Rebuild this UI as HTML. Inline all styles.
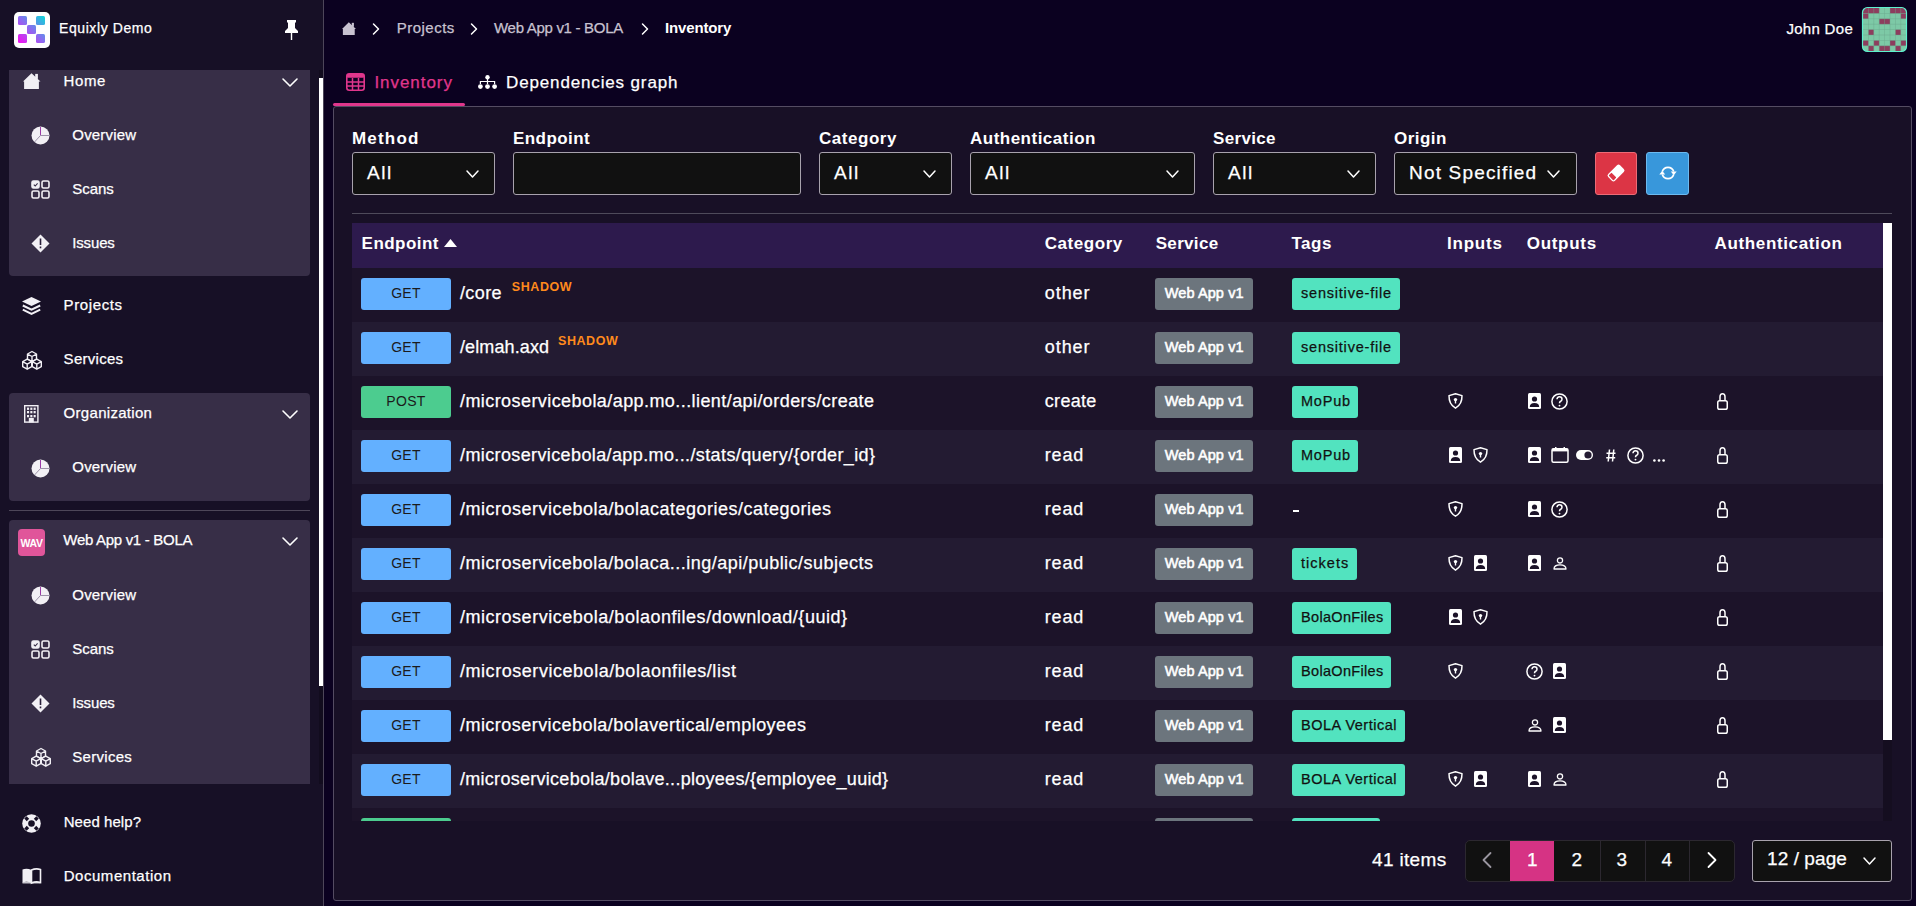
<!DOCTYPE html>
<html><head><meta charset="utf-8"><style>
html,body{margin:0;padding:0;width:1916px;height:906px;overflow:hidden;background:#0b0120;font-family:"Liberation Sans", sans-serif;}
.r{position:absolute;box-sizing:border-box;}
svg.r{overflow:visible}
.t{position:absolute;white-space:nowrap;}
</style></head><body>
<div class="r" style="left:0px;top:0px;width:323px;height:906px;background:#171026;"></div><div class="r" style="left:323px;top:0px;width:1px;height:906px;background:#4d4659;"></div><svg class="r" style="left:14px;top:12px;" width="36" height="36" viewBox="0 0 36 36"><rect width="36" height="36" rx="5" fill="#fff"/><defs><linearGradient id="lg" gradientUnits="userSpaceOnUse" x1="4" y1="31" x2="31" y2="4"><stop offset="0" stop-color="#f50ef0"/><stop offset="0.5" stop-color="#8a6cf0"/><stop offset="1" stop-color="#0ad8d8"/></linearGradient></defs><g fill="url(#lg)"><rect x="4" y="4" width="9" height="9" rx="1.5"/><rect x="22" y="4" width="9" height="9" rx="1.5"/><rect x="13" y="13" width="9" height="9" rx="1.5"/><rect x="4" y="22" width="9" height="9" rx="1.5"/><rect x="22" y="22" width="9" height="9" rx="1.5"/></g></svg><span class="t" style="left:59px;top:21.10px;font-size:14px;line-height:14px;color:#fff;font-weight:400;letter-spacing:0.584px;-webkit-text-stroke:0.25px #fff;">Equixly Demo</span><svg class="r" style="left:284px;top:20px;" width="15" height="20" viewBox="0 0 15 20"><path d="M3 0h9v2l-1 1v5l3 3v2H1v-2l3-3V3L3 2z" fill="#fff"/><rect x="6.8" y="13" width="1.4" height="7" fill="#fff"/></svg><div class="r" style="left:0;top:70px;width:319px;height:714px;overflow:hidden"><div class="r" style="left:9px;top:-30px;width:301px;height:236px;background:#372e47;border-radius:4px"></div><div class="r" style="left:9px;top:323px;width:301px;height:108px;background:#372e47;border-radius:4px"></div><div class="r" style="left:9px;top:440px;width:301px;height:1px;background:#4d4659;"></div><div class="r" style="left:9px;top:450px;width:301px;height:300px;background:#372e47;border-radius:4px"></div></div><div class="r" style="left:319px;top:70px;width:4px;height:714px;background:#120c1e;"></div><div class="r" style="left:319px;top:78px;width:4px;height:608px;background:#ffffff;"></div><div class="r" style="left:0;top:70px;width:319px;height:714px;overflow:hidden"><svg class="r" style="left:23px;top:2.9000000000000057px;" width="17.5" height="16" viewBox="0 0 17.5 16"><path d="M0 8.6 L8.5 0.2 L17.5 8.6 H15.9 V16 H1.1 V8.6Z" fill="#f2f0f5"/><rect x="12.2" y="0.9" width="2.7" height="5" fill="#f2f0f5"/></svg><span class="t" style="left:63.5px;top:2.65px;font-size:15px;line-height:15px;color:#fff;font-weight:400;letter-spacing:0.610px;-webkit-text-stroke:0.25px #fff;">Home</span><svg class="r" style="left:282px;top:8px;" width="16" height="9" viewBox="0 0 16 9"><path d="M1 1 L8.0 8 L15 1" fill="none" stroke="#fff" stroke-width="1.6" stroke-linecap="round" stroke-linejoin="round"/></svg><svg class="r" style="left:31px;top:55.5px;" width="19" height="19" viewBox="0 0 19 19"><circle cx="9.5" cy="9.5" r="9" fill="#f2f0f5"/><path d="M9.5 1v8.5" stroke="#9b3aa8" stroke-width="1" fill="none"/><path d="M9.5 9.5h8.5M9.5 9.5L3.5 16" stroke="#9d93aa" stroke-width="1" fill="none"/></svg><span class="t" style="left:72.3px;top:56.55px;font-size:15px;line-height:15px;color:#fff;font-weight:400;letter-spacing:0.189px;-webkit-text-stroke:0.25px #fff;">Overview</span><svg class="r" style="left:31px;top:109.5px;" width="19" height="19" viewBox="0 0 19 19"><g fill="none" stroke="#f2f0f5" stroke-width="1.6"><rect x="1" y="1" width="7" height="7" rx="1.5" fill="#f2f0f5"/><rect x="11" y="1" width="7" height="7" rx="1.5"/><rect x="1" y="11" width="7" height="7" rx="1.5"/><rect x="11" y="11" width="7" height="7" rx="1.5"/></g><path d="M2.8 4.6l1.4 1.4 2.4-2.6" stroke="#372e47" stroke-width="1.1" fill="none"/></svg><span class="t" style="left:72.3px;top:110.55px;font-size:15px;line-height:15px;color:#fff;font-weight:400;letter-spacing:-0.047px;-webkit-text-stroke:0.25px #fff;">Scans</span><svg class="r" style="left:31px;top:163.5px;" width="19" height="19" viewBox="0 0 19 19"><path d="M9.5 0.5 L18.5 9.5 L9.5 18.5 L0.5 9.5Z" fill="#f2f0f5" stroke-linejoin="round"/><rect x="8.7" y="4.5" width="1.6" height="6.5" fill="#2a1f3a"/><rect x="8.7" y="12.5" width="1.6" height="1.8" fill="#2a1f3a"/></svg><span class="t" style="left:72.3px;top:164.55px;font-size:15px;line-height:15px;color:#fff;font-weight:400;letter-spacing:-0.170px;-webkit-text-stroke:0.25px #fff;">Issues</span><svg class="r" style="left:22px;top:227px;" width="19" height="18" viewBox="0 0 19 18"><path d="M9.5 0 L19 4.5 L9.5 9 L0 4.5Z" fill="#f2f0f5"/><path d="M0.8 8.5 L9.5 12.6 L18.2 8.5" fill="none" stroke="#f2f0f5" stroke-width="2" stroke-linejoin="miter"/><path d="M0.8 12.6 L9.5 16.8 L18.2 12.6" fill="none" stroke="#f2f0f5" stroke-width="2" stroke-linejoin="miter"/></svg><span class="t" style="left:63.6px;top:227.35px;font-size:15px;line-height:15px;color:#fff;font-weight:400;letter-spacing:0.616px;-webkit-text-stroke:0.25px #fff;">Projects</span><svg class="r" style="left:22px;top:281px;" width="20" height="19" viewBox="0 0 20 19"><g fill="#171026" stroke="#f2f0f5" stroke-width="1.4" stroke-linejoin="round"><path d="M10 0.5 L14.5 3.0 V8.0 L10 10.5 L5.5 8.0 V3.0Z M5.5 3.0 L10 5.5 L14.5 3.0 M10 5.5 V10.5"/><path d="M5.2 8.2 L9.7 10.7 V15.7 L5.2 18.2 L0.7000000000000002 15.7 V10.7Z M0.7000000000000002 10.7 L5.2 13.2 L9.7 10.7 M5.2 13.2 V18.2"/><path d="M14.8 8.2 L19.3 10.7 V15.7 L14.8 18.2 L10.3 15.7 V10.7Z M10.3 10.7 L14.8 13.2 L19.3 10.7 M14.8 13.2 V18.2"/></g></svg><span class="t" style="left:63.6px;top:281.35px;font-size:15px;line-height:15px;color:#fff;font-weight:400;letter-spacing:0.283px;-webkit-text-stroke:0.25px #fff;">Services</span><svg class="r" style="left:24.3px;top:335px;" width="15" height="18" viewBox="0 0 15 18"><rect x="0.7" y="0.7" width="13.2" height="16.4" fill="none" stroke="#f2f0f5" stroke-width="1.4"/><rect x="3.0" y="2.6" width="2.1" height="2.3" fill="#f2f0f5"/><rect x="6.3" y="2.6" width="2.1" height="2.3" fill="#f2f0f5"/><rect x="9.6" y="2.6" width="2.1" height="2.3" fill="#f2f0f5"/><rect x="3.0" y="6.0" width="2.1" height="2.3" fill="#f2f0f5"/><rect x="6.3" y="6.0" width="2.1" height="2.3" fill="#f2f0f5"/><rect x="9.6" y="6.0" width="2.1" height="2.3" fill="#f2f0f5"/><rect x="3.0" y="10.0" width="2.1" height="2.3" fill="#f2f0f5"/><rect x="6.3" y="10.0" width="2.1" height="2.3" fill="#f2f0f5"/><rect x="9.6" y="10.0" width="2.1" height="2.3" fill="#f2f0f5"/><rect x="4.8" y="12.9" width="5" height="4.5" fill="#f2f0f5"/></svg><span class="t" style="left:63.6px;top:335.35px;font-size:15px;line-height:15px;color:#fff;font-weight:400;letter-spacing:0.299px;-webkit-text-stroke:0.25px #fff;">Organization</span><svg class="r" style="left:282px;top:340px;" width="16" height="9" viewBox="0 0 16 9"><path d="M1 1 L8.0 8 L15 1" fill="none" stroke="#fff" stroke-width="1.6" stroke-linecap="round" stroke-linejoin="round"/></svg><svg class="r" style="left:31px;top:389px;" width="19" height="19" viewBox="0 0 19 19"><circle cx="9.5" cy="9.5" r="9" fill="#f2f0f5"/><path d="M9.5 1v8.5" stroke="#9b3aa8" stroke-width="1" fill="none"/><path d="M9.5 9.5h8.5M9.5 9.5L3.5 16" stroke="#9d93aa" stroke-width="1" fill="none"/></svg><span class="t" style="left:72.3px;top:389.35px;font-size:15px;line-height:15px;color:#fff;font-weight:400;letter-spacing:0.189px;-webkit-text-stroke:0.25px #fff;">Overview</span><svg class="r" style="left:18px;top:459px;" width="27" height="27" viewBox="0 0 27 27"><rect width="27" height="27" rx="4" fill="#e0559a"/><text x="13.5" y="17.6" text-anchor="middle" font-family="Liberation Sans" font-weight="bold" font-size="10.5" letter-spacing="-0.35" fill="#fff">WAV</text></svg><span class="t" style="left:63.3px;top:462.35px;font-size:15px;line-height:15px;color:#fff;font-weight:400;letter-spacing:-0.299px;-webkit-text-stroke:0.25px #fff;">Web App v1 - BOLA</span><svg class="r" style="left:282px;top:467px;" width="16" height="9" viewBox="0 0 16 9"><path d="M1 1 L8.0 8 L15 1" fill="none" stroke="#fff" stroke-width="1.6" stroke-linecap="round" stroke-linejoin="round"/></svg><svg class="r" style="left:31px;top:515.5px;" width="19" height="19" viewBox="0 0 19 19"><circle cx="9.5" cy="9.5" r="9" fill="#f2f0f5"/><path d="M9.5 1v8.5" stroke="#9b3aa8" stroke-width="1" fill="none"/><path d="M9.5 9.5h8.5M9.5 9.5L3.5 16" stroke="#9d93aa" stroke-width="1" fill="none"/></svg><span class="t" style="left:72.3px;top:516.55px;font-size:15px;line-height:15px;color:#fff;font-weight:400;letter-spacing:0.189px;-webkit-text-stroke:0.25px #fff;">Overview</span><svg class="r" style="left:31px;top:569.5px;" width="19" height="19" viewBox="0 0 19 19"><g fill="none" stroke="#f2f0f5" stroke-width="1.6"><rect x="1" y="1" width="7" height="7" rx="1.5" fill="#f2f0f5"/><rect x="11" y="1" width="7" height="7" rx="1.5"/><rect x="1" y="11" width="7" height="7" rx="1.5"/><rect x="11" y="11" width="7" height="7" rx="1.5"/></g><path d="M2.8 4.6l1.4 1.4 2.4-2.6" stroke="#372e47" stroke-width="1.1" fill="none"/></svg><span class="t" style="left:72.3px;top:570.55px;font-size:15px;line-height:15px;color:#fff;font-weight:400;letter-spacing:-0.047px;-webkit-text-stroke:0.25px #fff;">Scans</span><svg class="r" style="left:31px;top:623.5px;" width="19" height="19" viewBox="0 0 19 19"><path d="M9.5 0.5 L18.5 9.5 L9.5 18.5 L0.5 9.5Z" fill="#f2f0f5" stroke-linejoin="round"/><rect x="8.7" y="4.5" width="1.6" height="6.5" fill="#2a1f3a"/><rect x="8.7" y="12.5" width="1.6" height="1.8" fill="#2a1f3a"/></svg><span class="t" style="left:72.3px;top:624.55px;font-size:15px;line-height:15px;color:#fff;font-weight:400;letter-spacing:-0.170px;-webkit-text-stroke:0.25px #fff;">Issues</span><svg class="r" style="left:31px;top:678px;" width="20" height="19" viewBox="0 0 20 19"><g fill="#372e47" stroke="#f2f0f5" stroke-width="1.4" stroke-linejoin="round"><path d="M10 0.5 L14.5 3.0 V8.0 L10 10.5 L5.5 8.0 V3.0Z M5.5 3.0 L10 5.5 L14.5 3.0 M10 5.5 V10.5"/><path d="M5.2 8.2 L9.7 10.7 V15.7 L5.2 18.2 L0.7000000000000002 15.7 V10.7Z M0.7000000000000002 10.7 L5.2 13.2 L9.7 10.7 M5.2 13.2 V18.2"/><path d="M14.8 8.2 L19.3 10.7 V15.7 L14.8 18.2 L10.3 15.7 V10.7Z M10.3 10.7 L14.8 13.2 L19.3 10.7 M14.8 13.2 V18.2"/></g></svg><span class="t" style="left:72.3px;top:678.55px;font-size:15px;line-height:15px;color:#fff;font-weight:400;letter-spacing:0.283px;-webkit-text-stroke:0.25px #fff;">Services</span></div><svg class="r" style="left:22px;top:814px;" width="19" height="19" viewBox="0 0 19 19"><circle cx="9.5" cy="9.5" r="9.3" fill="#f2f0f5"/><circle cx="9.5" cy="9.5" r="3.3" fill="#171026"/><rect x="-1.7" y="-8.6" width="3.4" height="3.6" fill="#171026" transform="translate(9.5 9.5) rotate(45)"/><rect x="-1.7" y="-8.6" width="3.4" height="3.6" fill="#171026" transform="translate(9.5 9.5) rotate(135)"/><rect x="-1.7" y="-8.6" width="3.4" height="3.6" fill="#171026" transform="translate(9.5 9.5) rotate(225)"/><rect x="-1.7" y="-8.6" width="3.4" height="3.6" fill="#171026" transform="translate(9.5 9.5) rotate(315)"/></svg><span class="t" style="left:63.7px;top:814.35px;font-size:15px;line-height:15px;color:#fff;font-weight:400;letter-spacing:0.068px;-webkit-text-stroke:0.25px #fff;">Need help?</span><svg class="r" style="left:22px;top:868px;" width="19" height="16" viewBox="0 0 19 16"><path d="M0.5 1.5 Q5 0 9.5 2 V15 Q5 13 0.5 14.5Z" fill="#f2f0f5"/><path d="M18.5 1.5 Q14 0 9.5 2 V15 Q14 13 18.5 14.5Z" fill="none" stroke="#f2f0f5" stroke-width="1.6"/><path d="M0.5 14.8 H18.5" stroke="#f2f0f5" stroke-width="1.2"/></svg><span class="t" style="left:63.7px;top:868.35px;font-size:15px;line-height:15px;color:#fff;font-weight:400;letter-spacing:0.538px;-webkit-text-stroke:0.25px #fff;">Documentation</span><svg class="r" style="left:342px;top:21.5px;" width="14" height="13" viewBox="0 0 17.5 16"><path d="M0 8.6 L8.5 0.2 L17.5 8.6 H15.9 V16 H1.1 V8.6Z" fill="#c8c2d0"/><rect x="12.2" y="0.9" width="2.7" height="5" fill="#c8c2d0"/></svg><svg class="r" style="left:372px;top:23px;" width="8" height="12" viewBox="0 0 8 12"><path d="M1.5 1 L6.5 6.0 L1.5 11" fill="none" stroke="#fff" stroke-width="1.5" stroke-linecap="round" stroke-linejoin="round"/></svg><span class="t" style="left:396.8px;top:20.25px;font-size:15px;line-height:15px;color:#c8c2d0;font-weight:400;letter-spacing:0.474px;-webkit-text-stroke:0.25px #c8c2d0;">Projects</span><svg class="r" style="left:469.5px;top:23px;" width="8" height="12" viewBox="0 0 8 12"><path d="M1.5 1 L6.5 6.0 L1.5 11" fill="none" stroke="#fff" stroke-width="1.5" stroke-linecap="round" stroke-linejoin="round"/></svg><span class="t" style="left:494px;top:20.25px;font-size:15px;line-height:15px;color:#c8c2d0;font-weight:400;letter-spacing:-0.299px;-webkit-text-stroke:0.25px #c8c2d0;">Web App v1 - BOLA</span><svg class="r" style="left:641px;top:23px;" width="8" height="12" viewBox="0 0 8 12"><path d="M1.5 1 L6.5 6.0 L1.5 11" fill="none" stroke="#fff" stroke-width="1.5" stroke-linecap="round" stroke-linejoin="round"/></svg><span class="t" style="left:665px;top:20.25px;font-size:15px;line-height:15px;color:#fff;font-weight:700;letter-spacing:-0.147px;">Inventory</span><span class="t" style="left:1786.4px;top:20.55px;font-size:15px;line-height:15px;color:#fff;font-weight:400;letter-spacing:0.304px;-webkit-text-stroke:0.25px #fff;">John Doe</span><svg class="r" style="left:1862px;top:7px;" width="45" height="45" viewBox="0 0 45 45"><defs><clipPath id="avc"><rect x="0.5" y="0.5" width="44" height="44" rx="5"/></clipPath></defs><rect x="0.5" y="0.5" width="44" height="44" rx="5" fill="#7dc9a6"/><g clip-path="url(#avc)"><rect x="1.0" y="1.0" width="16.200000000000003" height="5.4" fill="#8d3d5e"/><rect x="28.0" y="1.0" width="16.200000000000003" height="5.4" fill="#8d3d5e"/><rect x="1.0" y="6.4" width="5.4" height="5.4" fill="#8d3d5e"/><rect x="38.800000000000004" y="6.4" width="5.4" height="5.4" fill="#8d3d5e"/><rect x="17.200000000000003" y="11.8" width="10.8" height="5.4" fill="#8d3d5e"/><rect x="6.4" y="22.6" width="5.4" height="5.4" fill="#8d3d5e"/><rect x="33.400000000000006" y="22.6" width="5.4" height="5.4" fill="#8d3d5e"/><rect x="1.0" y="33.400000000000006" width="5.4" height="5.4" fill="#8d3d5e"/><rect x="11.8" y="33.400000000000006" width="5.4" height="5.4" fill="#8d3d5e"/><rect x="28.0" y="33.400000000000006" width="5.4" height="5.4" fill="#8d3d5e"/><rect x="38.800000000000004" y="33.400000000000006" width="5.4" height="5.4" fill="#8d3d5e"/><rect x="6.4" y="38.800000000000004" width="5.4" height="5.4" fill="#8d3d5e"/><rect x="17.200000000000003" y="38.800000000000004" width="10.8" height="5.4" fill="#8d3d5e"/><rect x="33.400000000000006" y="38.800000000000004" width="5.4" height="5.4" fill="#8d3d5e"/><rect x="6.0" y="0" width="0.8" height="45" fill="#6aa88c" opacity="0.5"/><rect y="6.0" x="0" height="0.8" width="45" fill="#6aa88c" opacity="0.5"/><rect x="11.4" y="0" width="0.8" height="45" fill="#6aa88c" opacity="0.5"/><rect y="11.4" x="0" height="0.8" width="45" fill="#6aa88c" opacity="0.5"/><rect x="16.800000000000004" y="0" width="0.8" height="45" fill="#6aa88c" opacity="0.5"/><rect y="16.800000000000004" x="0" height="0.8" width="45" fill="#6aa88c" opacity="0.5"/><rect x="22.200000000000003" y="0" width="0.8" height="45" fill="#6aa88c" opacity="0.5"/><rect y="22.200000000000003" x="0" height="0.8" width="45" fill="#6aa88c" opacity="0.5"/><rect x="27.6" y="0" width="0.8" height="45" fill="#6aa88c" opacity="0.5"/><rect y="27.6" x="0" height="0.8" width="45" fill="#6aa88c" opacity="0.5"/><rect x="33.00000000000001" y="0" width="0.8" height="45" fill="#6aa88c" opacity="0.5"/><rect y="33.00000000000001" x="0" height="0.8" width="45" fill="#6aa88c" opacity="0.5"/><rect x="38.400000000000006" y="0" width="0.8" height="45" fill="#6aa88c" opacity="0.5"/><rect y="38.400000000000006" x="0" height="0.8" width="45" fill="#6aa88c" opacity="0.5"/></g><rect x="0.5" y="0.5" width="44" height="44" rx="5" fill="none" stroke="#5ef2cf" stroke-width="1.2"/></svg><svg class="r" style="left:346px;top:73px;" width="19" height="18" viewBox="0 0 19 18"><rect x="0.8" y="0.8" width="17.4" height="16.4" rx="2.5" fill="none" stroke="#e0368c" stroke-width="1.6"/><rect x="0.8" y="0.8" width="17.4" height="4" rx="1.5" fill="#e0368c"/><g stroke="#e0368c" stroke-width="1.5"><path d="M1 9h17M1 13h17M6.5 5v12M12.5 5v12"/></g></svg><span class="t" style="left:374.4px;top:73.95px;font-size:17px;line-height:17px;color:#e0368c;font-weight:400;letter-spacing:0.947px;-webkit-text-stroke:0.25px #e0368c;">Inventory</span><div class="r" style="left:333px;top:103px;width:132px;height:3px;background:#e0368c;border-radius:2px"></div><svg class="r" style="left:478px;top:75px;" width="19" height="14" viewBox="0 0 19 14"><g fill="#fff"><circle cx="9.5" cy="2.2" r="2.2"/><circle cx="2.4" cy="11.6" r="2.4"/><circle cx="9.5" cy="11.6" r="2.4"/><circle cx="16.6" cy="11.6" r="2.4"/></g><path d="M9.5 3v6M2.4 9V6.5h14.2V9" stroke="#fff" stroke-width="1.2" fill="none"/></svg><span class="t" style="left:506px;top:73.95px;font-size:17px;line-height:17px;color:#fff;font-weight:400;letter-spacing:0.857px;-webkit-text-stroke:0.25px #fff;">Dependencies graph</span><div class="r" style="left:333px;top:106px;width:1577px;height:794px;background:#181026;border:1px solid #544c62;border-radius:3px;box-sizing:content-box;left:332.5px;top:106px;width:1577px;height:793px"></div><span class="t" style="left:352px;top:129.75px;font-size:17px;line-height:17px;color:#fff;font-weight:700;letter-spacing:1.191px;">Method</span><span class="t" style="left:513px;top:129.75px;font-size:17px;line-height:17px;color:#fff;font-weight:700;letter-spacing:0.431px;">Endpoint</span><span class="t" style="left:819px;top:129.75px;font-size:17px;line-height:17px;color:#fff;font-weight:700;letter-spacing:0.538px;">Category</span><span class="t" style="left:970px;top:129.75px;font-size:17px;line-height:17px;color:#fff;font-weight:700;letter-spacing:0.492px;">Authentication</span><span class="t" style="left:1213px;top:129.75px;font-size:17px;line-height:17px;color:#fff;font-weight:700;letter-spacing:0.326px;">Service</span><span class="t" style="left:1394px;top:129.75px;font-size:17px;line-height:17px;color:#fff;font-weight:700;letter-spacing:0.466px;">Origin</span><div class="r" style="left:352px;top:152px;width:143px;height:43px;background:#111111;border:1px solid #a8a2ad;border-radius:3px"></div><span class="t" style="left:367px;top:163.05px;font-size:19px;line-height:19px;color:#fff;font-weight:400;letter-spacing:1.553px;-webkit-text-stroke:0.25px #fff;">All</span><svg class="r" style="left:466px;top:170px;" width="13" height="8" viewBox="0 0 13 8"><path d="M1 1 L6.5 7 L12 1" fill="none" stroke="#fff" stroke-width="1.5" stroke-linecap="round" stroke-linejoin="round"/></svg><div class="r" style="left:513px;top:152px;width:288px;height:43px;background:#111111;border:1px solid #a8a2ad;border-radius:3px"></div><div class="r" style="left:819px;top:152px;width:133px;height:43px;background:#111111;border:1px solid #a8a2ad;border-radius:3px"></div><span class="t" style="left:834px;top:163.05px;font-size:19px;line-height:19px;color:#fff;font-weight:400;letter-spacing:1.553px;-webkit-text-stroke:0.25px #fff;">All</span><svg class="r" style="left:923px;top:170px;" width="13" height="8" viewBox="0 0 13 8"><path d="M1 1 L6.5 7 L12 1" fill="none" stroke="#fff" stroke-width="1.5" stroke-linecap="round" stroke-linejoin="round"/></svg><div class="r" style="left:970px;top:152px;width:225px;height:43px;background:#111111;border:1px solid #a8a2ad;border-radius:3px"></div><span class="t" style="left:985px;top:163.05px;font-size:19px;line-height:19px;color:#fff;font-weight:400;letter-spacing:1.553px;-webkit-text-stroke:0.25px #fff;">All</span><svg class="r" style="left:1166px;top:170px;" width="13" height="8" viewBox="0 0 13 8"><path d="M1 1 L6.5 7 L12 1" fill="none" stroke="#fff" stroke-width="1.5" stroke-linecap="round" stroke-linejoin="round"/></svg><div class="r" style="left:1213px;top:152px;width:163px;height:43px;background:#111111;border:1px solid #a8a2ad;border-radius:3px"></div><span class="t" style="left:1228px;top:163.05px;font-size:19px;line-height:19px;color:#fff;font-weight:400;letter-spacing:1.553px;-webkit-text-stroke:0.25px #fff;">All</span><svg class="r" style="left:1347px;top:170px;" width="13" height="8" viewBox="0 0 13 8"><path d="M1 1 L6.5 7 L12 1" fill="none" stroke="#fff" stroke-width="1.5" stroke-linecap="round" stroke-linejoin="round"/></svg><div class="r" style="left:1394px;top:152px;width:183px;height:43px;background:#111111;border:1px solid #a8a2ad;border-radius:3px"></div><span class="t" style="left:1409px;top:163.05px;font-size:19px;line-height:19px;color:#fff;font-weight:400;letter-spacing:1.180px;-webkit-text-stroke:0.25px #fff;">Not Specified</span><svg class="r" style="left:1547px;top:170px;" width="13" height="8" viewBox="0 0 13 8"><path d="M1 1 L6.5 7 L12 1" fill="none" stroke="#fff" stroke-width="1.5" stroke-linecap="round" stroke-linejoin="round"/></svg><div class="r" style="left:1595px;top:152px;width:42px;height:43px;background:#dc3545;border:1px solid #ec6b76;border-radius:3px"></div><svg class="r" style="left:1605px;top:162px;" width="22" height="22" viewBox="0 0 22 22"><g transform="rotate(-45 11 11)"><rect x="2.6" y="6.2" width="16.8" height="9.6" rx="2.2" fill="#fff"/><rect x="3.9" y="7.5" width="4.2" height="7" rx="0.8" fill="#dc3545"/></g></svg><div class="r" style="left:1646px;top:152px;width:43px;height:43px;background:#3897db;border:1px solid #6cbaf0;border-radius:3px"></div><svg class="r" style="left:1657px;top:162px;" width="22" height="22" viewBox="0 0 22 22"><g fill="none" stroke="#fff" stroke-width="1.7"><path d="M5.3 9.6 A6 6 0 0 1 16.7 9.6"/><path d="M16.7 12.4 A6 6 0 0 1 5.3 12.4"/></g><path d="M13.8 9.4 H19.7 L16.75 13.2Z" fill="#fff"/><path d="M2.3 12.6 H8.2 L5.25 8.8Z" fill="#fff"/></svg><div class="r" style="left:352px;top:213px;width:1540px;height:1px;background:#4e4a5a;"></div><div class="r" style="left:352px;top:223px;width:1540px;height:598px;overflow:hidden"><div class="r" style="left:0px;top:0px;width:1531px;height:45px;background:#2d1a4d;"></div><span class="t" style="left:9.600000000000023px;top:11.95px;font-size:17px;line-height:17px;color:#fff;font-weight:700;letter-spacing:0.460px;">Endpoint</span><span class="t" style="left:692.8px;top:11.95px;font-size:17px;line-height:17px;color:#fff;font-weight:700;letter-spacing:0.538px;">Category</span><span class="t" style="left:803.7px;top:11.95px;font-size:17px;line-height:17px;color:#fff;font-weight:700;letter-spacing:0.326px;">Service</span><span class="t" style="left:939.5px;top:11.95px;font-size:17px;line-height:17px;color:#fff;font-weight:700;letter-spacing:0.480px;">Tags</span><span class="t" style="left:1095.1px;top:11.95px;font-size:17px;line-height:17px;color:#fff;font-weight:700;letter-spacing:0.753px;">Inputs</span><span class="t" style="left:1174.7px;top:11.95px;font-size:17px;line-height:17px;color:#fff;font-weight:700;letter-spacing:0.717px;">Outputs</span><span class="t" style="left:1362.5px;top:11.95px;font-size:17px;line-height:17px;color:#fff;font-weight:700;letter-spacing:0.646px;">Authentication</span><svg class="r" style="left:92px;top:16px;" width="13" height="8" viewBox="0 0 13 8"><path d="M6.5 0 L13 8 H0Z" fill="#fff"/></svg><div class="r" style="left:0px;top:45px;width:1531px;height:54px;background:#1c1329;"></div><div class="r" style="left:9px;top:55px;width:90px;height:32px;background:#63b0ff;border-radius:3px"></div><div class="r" style="left:9px;top:54px;width:90px;height:32px;line-height:32px;text-align:center;font-size:14px;color:#1b1b1b;letter-spacing:0.3px">GET</div><div class="r" style="left:803px;top:55px;width:98px;height:32px;background:#6c757d;border-radius:3px"></div><span class="t" style="left:108px;top:60.70px;font-size:18px;line-height:18px;color:#fff;font-weight:400;letter-spacing:0.374px;-webkit-text-stroke:0.25px #fff;">/core</span><span class="t" style="left:159.8px;top:58.38px;font-size:12.5px;line-height:12.5px;color:#ff8a1c;font-weight:700;letter-spacing:0.572px;">SHADOW</span><span class="t" style="left:692.8px;top:60.90px;font-size:18px;line-height:18px;color:#fff;font-weight:400;letter-spacing:0.917px;-webkit-text-stroke:0.25px #fff;">other</span><span class="t" style="left:812.8px;top:63.17px;font-size:14.5px;line-height:14.5px;color:#fff;font-weight:400;letter-spacing:0.093px;-webkit-text-stroke:0.55px #fff;">Web App v1</span><div class="r" style="left:940px;top:55px;width:108px;height:32px;background:#52e3bf;border-radius:3px"></div><span class="t" style="left:949px;top:63.17px;font-size:14.5px;line-height:14.5px;color:#111;font-weight:400;letter-spacing:0.791px;-webkit-text-stroke:0.25px #111;">sensitive-file</span><div class="r" style="left:0px;top:99px;width:1531px;height:54px;background:#231b32;"></div><div class="r" style="left:9px;top:109px;width:90px;height:32px;background:#63b0ff;border-radius:3px"></div><div class="r" style="left:9px;top:108px;width:90px;height:32px;line-height:32px;text-align:center;font-size:14px;color:#1b1b1b;letter-spacing:0.3px">GET</div><div class="r" style="left:803px;top:109px;width:98px;height:32px;background:#6c757d;border-radius:3px"></div><span class="t" style="left:108px;top:114.70px;font-size:18px;line-height:18px;color:#fff;font-weight:400;letter-spacing:0.107px;-webkit-text-stroke:0.25px #fff;">/elmah.axd</span><span class="t" style="left:206px;top:112.38px;font-size:12.5px;line-height:12.5px;color:#ff8a1c;font-weight:700;letter-spacing:0.572px;">SHADOW</span><span class="t" style="left:692.8px;top:114.90px;font-size:18px;line-height:18px;color:#fff;font-weight:400;letter-spacing:0.917px;-webkit-text-stroke:0.25px #fff;">other</span><span class="t" style="left:812.8px;top:117.17px;font-size:14.5px;line-height:14.5px;color:#fff;font-weight:400;letter-spacing:0.093px;-webkit-text-stroke:0.55px #fff;">Web App v1</span><div class="r" style="left:940px;top:109px;width:108px;height:32px;background:#52e3bf;border-radius:3px"></div><span class="t" style="left:949px;top:117.17px;font-size:14.5px;line-height:14.5px;color:#111;font-weight:400;letter-spacing:0.791px;-webkit-text-stroke:0.25px #111;">sensitive-file</span><div class="r" style="left:0px;top:153px;width:1531px;height:54px;background:#1c1329;"></div><div class="r" style="left:9px;top:163px;width:90px;height:32px;background:#4ccc8f;border-radius:3px"></div><div class="r" style="left:9px;top:162px;width:90px;height:32px;line-height:32px;text-align:center;font-size:14px;color:#1b1b1b;letter-spacing:0.3px">POST</div><div class="r" style="left:803px;top:163px;width:98px;height:32px;background:#6c757d;border-radius:3px"></div><span class="t" style="left:108px;top:168.70px;font-size:18px;line-height:18px;color:#fff;font-weight:400;letter-spacing:0.425px;-webkit-text-stroke:0.25px #fff;">/microservicebola/app.mo...lient/api/orders/create</span><span class="t" style="left:692.8px;top:168.90px;font-size:18px;line-height:18px;color:#fff;font-weight:400;letter-spacing:0.297px;-webkit-text-stroke:0.25px #fff;">create</span><span class="t" style="left:812.8px;top:171.18px;font-size:14.5px;line-height:14.5px;color:#fff;font-weight:400;letter-spacing:0.093px;-webkit-text-stroke:0.55px #fff;">Web App v1</span><div class="r" style="left:940px;top:163px;width:66px;height:32px;background:#52e3bf;border-radius:3px"></div><span class="t" style="left:949px;top:171.18px;font-size:14.5px;line-height:14.5px;color:#111;font-weight:400;letter-spacing:0.780px;-webkit-text-stroke:0.25px #111;">MoPub</span><svg class="r" style="left:1095.5px;top:170.0px;" width="15" height="16" viewBox="0 0 15 16"><path d="M7.5 0.8 L14 2.6 Q14.2 11.5 7.5 15.2 Q0.8 11.5 1 2.6Z" fill="none" stroke="#fff" stroke-width="1.5" stroke-linejoin="round"/><circle cx="7.5" cy="6.6" r="1.7" fill="#fff"/><rect x="6.8" y="7" width="1.4" height="3.5" fill="#fff"/></svg><svg class="r" style="left:1176.0px;top:170.0px;" width="13" height="16" viewBox="0 0 13 16"><rect x="0" y="0" width="13" height="16" rx="1.5" fill="#fff"/><circle cx="6.5" cy="6" r="2.6" fill="#1c1329"/><path d="M1.8 14 Q1.8 10 6.5 10 Q11.2 10 11.2 14Z" fill="#1c1329"/></svg><svg class="r" style="left:1199.0px;top:169.5px;" width="17" height="17" viewBox="0 0 17 17"><circle cx="8.5" cy="8.5" r="7.6" fill="none" stroke="#fff" stroke-width="1.5"/><path d="M6 6.3 Q6 3.8 8.5 3.8 Q11 3.8 11 6.2 Q11 7.6 9.3 8.5 Q8.5 9 8.5 10.3" fill="none" stroke="#fff" stroke-width="1.5"/><circle cx="8.5" cy="12.6" r="0.95" fill="#fff"/></svg><svg class="r" style="left:1365.2px;top:169.5px;" width="11" height="17" viewBox="0 0 11 17"><path d="M3 8 V3.8 Q3 0.75 5.5 0.75 Q8 0.75 8 3.8 V8" fill="none" stroke="#fff" stroke-width="1.5"/><rect x="0.75" y="7.7" width="9.5" height="8.6" rx="1.8" fill="none" stroke="#fff" stroke-width="1.5"/></svg><div class="r" style="left:0px;top:207px;width:1531px;height:54px;background:#231b32;"></div><div class="r" style="left:9px;top:217px;width:90px;height:32px;background:#63b0ff;border-radius:3px"></div><div class="r" style="left:9px;top:216px;width:90px;height:32px;line-height:32px;text-align:center;font-size:14px;color:#1b1b1b;letter-spacing:0.3px">GET</div><div class="r" style="left:803px;top:217px;width:98px;height:32px;background:#6c757d;border-radius:3px"></div><span class="t" style="left:108px;top:222.70px;font-size:18px;line-height:18px;color:#fff;font-weight:400;letter-spacing:0.384px;-webkit-text-stroke:0.25px #fff;">/microservicebola/app.mo.../stats/query/{order_id}</span><span class="t" style="left:692.8px;top:222.90px;font-size:18px;line-height:18px;color:#fff;font-weight:400;letter-spacing:0.828px;-webkit-text-stroke:0.25px #fff;">read</span><span class="t" style="left:812.8px;top:225.18px;font-size:14.5px;line-height:14.5px;color:#fff;font-weight:400;letter-spacing:0.093px;-webkit-text-stroke:0.55px #fff;">Web App v1</span><div class="r" style="left:940px;top:217px;width:66px;height:32px;background:#52e3bf;border-radius:3px"></div><span class="t" style="left:949px;top:225.18px;font-size:14.5px;line-height:14.5px;color:#111;font-weight:400;letter-spacing:0.780px;-webkit-text-stroke:0.25px #111;">MoPub</span><svg class="r" style="left:1096.5px;top:224.0px;" width="13" height="16" viewBox="0 0 13 16"><rect x="0" y="0" width="13" height="16" rx="1.5" fill="#fff"/><circle cx="6.5" cy="6" r="2.6" fill="#1c1329"/><path d="M1.8 14 Q1.8 10 6.5 10 Q11.2 10 11.2 14Z" fill="#1c1329"/></svg><svg class="r" style="left:1120.5px;top:224.0px;" width="15" height="16" viewBox="0 0 15 16"><path d="M7.5 0.8 L14 2.6 Q14.2 11.5 7.5 15.2 Q0.8 11.5 1 2.6Z" fill="none" stroke="#fff" stroke-width="1.5" stroke-linejoin="round"/><circle cx="7.5" cy="6.6" r="1.7" fill="#fff"/><rect x="6.8" y="7" width="1.4" height="3.5" fill="#fff"/></svg><svg class="r" style="left:1176.0px;top:224.0px;" width="13" height="16" viewBox="0 0 13 16"><rect x="0" y="0" width="13" height="16" rx="1.5" fill="#fff"/><circle cx="6.5" cy="6" r="2.6" fill="#1c1329"/><path d="M1.8 14 Q1.8 10 6.5 10 Q11.2 10 11.2 14Z" fill="#1c1329"/></svg><svg class="r" style="left:1198.5px;top:224.0px;" width="18" height="16" viewBox="0 0 18 16"><rect x="1" y="1.8" width="16" height="13.4" rx="1.5" fill="none" stroke="#fff" stroke-width="1.5"/><rect x="1" y="1.8" width="16" height="2.6" fill="#fff"/><rect x="4" y="0" width="1.5" height="3" fill="#fff"/><rect x="12.5" y="0" width="1.5" height="3" fill="#fff"/></svg><svg class="r" style="left:1224.0px;top:227.0px;" width="17" height="10" viewBox="0 0 17 10"><rect x="0" y="0" width="17" height="10" rx="5" fill="#fff"/><circle cx="12" cy="5" r="3.6" fill="#241b33"/></svg><svg class="r" style="left:1253.5px;top:225.5px;" width="10" height="13" viewBox="0 0 10 13"><path d="M3.5 0.5 L2.2 12.5 M7.8 0.5 L6.5 12.5 M0.5 4.2 H9.5 M0.2 8.8 H9.2" stroke="#fff" stroke-width="1.5" fill="none"/></svg><svg class="r" style="left:1275.0px;top:223.5px;" width="17" height="17" viewBox="0 0 17 17"><circle cx="8.5" cy="8.5" r="7.6" fill="none" stroke="#fff" stroke-width="1.5"/><path d="M6 6.3 Q6 3.8 8.5 3.8 Q11 3.8 11 6.2 Q11 7.6 9.3 8.5 Q8.5 9 8.5 10.3" fill="none" stroke="#fff" stroke-width="1.5"/><circle cx="8.5" cy="12.6" r="0.95" fill="#fff"/></svg><svg class="r" style="left:1301.0px;top:235.5px;" width="12" height="3" viewBox="0 0 12 3"><circle cx="1.4" cy="1.5" r="1.3" fill="#fff"/><circle cx="6" cy="1.5" r="1.3" fill="#fff"/><circle cx="10.6" cy="1.5" r="1.3" fill="#fff"/></svg><svg class="r" style="left:1365.2px;top:223.5px;" width="11" height="17" viewBox="0 0 11 17"><path d="M3 8 V3.8 Q3 0.75 5.5 0.75 Q8 0.75 8 3.8 V8" fill="none" stroke="#fff" stroke-width="1.5"/><rect x="0.75" y="7.7" width="9.5" height="8.6" rx="1.8" fill="none" stroke="#fff" stroke-width="1.5"/></svg><div class="r" style="left:0px;top:261px;width:1531px;height:54px;background:#1c1329;"></div><div class="r" style="left:9px;top:271px;width:90px;height:32px;background:#63b0ff;border-radius:3px"></div><div class="r" style="left:9px;top:270px;width:90px;height:32px;line-height:32px;text-align:center;font-size:14px;color:#1b1b1b;letter-spacing:0.3px">GET</div><div class="r" style="left:803px;top:271px;width:98px;height:32px;background:#6c757d;border-radius:3px"></div><span class="t" style="left:108px;top:276.70px;font-size:18px;line-height:18px;color:#fff;font-weight:400;letter-spacing:0.496px;-webkit-text-stroke:0.25px #fff;">/microservicebola/bolacategories/categories</span><span class="t" style="left:692.8px;top:276.90px;font-size:18px;line-height:18px;color:#fff;font-weight:400;letter-spacing:0.828px;-webkit-text-stroke:0.25px #fff;">read</span><span class="t" style="left:812.8px;top:279.18px;font-size:14.5px;line-height:14.5px;color:#fff;font-weight:400;letter-spacing:0.093px;-webkit-text-stroke:0.55px #fff;">Web App v1</span><div class="r" style="left:941px;top:287px;width:6px;height:1.6px;background:#fff;"></div><svg class="r" style="left:1095.5px;top:278.0px;" width="15" height="16" viewBox="0 0 15 16"><path d="M7.5 0.8 L14 2.6 Q14.2 11.5 7.5 15.2 Q0.8 11.5 1 2.6Z" fill="none" stroke="#fff" stroke-width="1.5" stroke-linejoin="round"/><circle cx="7.5" cy="6.6" r="1.7" fill="#fff"/><rect x="6.8" y="7" width="1.4" height="3.5" fill="#fff"/></svg><svg class="r" style="left:1176.0px;top:278.0px;" width="13" height="16" viewBox="0 0 13 16"><rect x="0" y="0" width="13" height="16" rx="1.5" fill="#fff"/><circle cx="6.5" cy="6" r="2.6" fill="#1c1329"/><path d="M1.8 14 Q1.8 10 6.5 10 Q11.2 10 11.2 14Z" fill="#1c1329"/></svg><svg class="r" style="left:1199.0px;top:277.5px;" width="17" height="17" viewBox="0 0 17 17"><circle cx="8.5" cy="8.5" r="7.6" fill="none" stroke="#fff" stroke-width="1.5"/><path d="M6 6.3 Q6 3.8 8.5 3.8 Q11 3.8 11 6.2 Q11 7.6 9.3 8.5 Q8.5 9 8.5 10.3" fill="none" stroke="#fff" stroke-width="1.5"/><circle cx="8.5" cy="12.6" r="0.95" fill="#fff"/></svg><svg class="r" style="left:1365.2px;top:277.5px;" width="11" height="17" viewBox="0 0 11 17"><path d="M3 8 V3.8 Q3 0.75 5.5 0.75 Q8 0.75 8 3.8 V8" fill="none" stroke="#fff" stroke-width="1.5"/><rect x="0.75" y="7.7" width="9.5" height="8.6" rx="1.8" fill="none" stroke="#fff" stroke-width="1.5"/></svg><div class="r" style="left:0px;top:315px;width:1531px;height:54px;background:#231b32;"></div><div class="r" style="left:9px;top:325px;width:90px;height:32px;background:#63b0ff;border-radius:3px"></div><div class="r" style="left:9px;top:324px;width:90px;height:32px;line-height:32px;text-align:center;font-size:14px;color:#1b1b1b;letter-spacing:0.3px">GET</div><div class="r" style="left:803px;top:325px;width:98px;height:32px;background:#6c757d;border-radius:3px"></div><span class="t" style="left:108px;top:330.70px;font-size:18px;line-height:18px;color:#fff;font-weight:400;letter-spacing:0.486px;-webkit-text-stroke:0.25px #fff;">/microservicebola/bolaca...ing/api/public/subjects</span><span class="t" style="left:692.8px;top:330.90px;font-size:18px;line-height:18px;color:#fff;font-weight:400;letter-spacing:0.828px;-webkit-text-stroke:0.25px #fff;">read</span><span class="t" style="left:812.8px;top:333.18px;font-size:14.5px;line-height:14.5px;color:#fff;font-weight:400;letter-spacing:0.093px;-webkit-text-stroke:0.55px #fff;">Web App v1</span><div class="r" style="left:940px;top:325px;width:65px;height:32px;background:#52e3bf;border-radius:3px"></div><span class="t" style="left:949px;top:333.18px;font-size:14.5px;line-height:14.5px;color:#111;font-weight:400;letter-spacing:1.026px;-webkit-text-stroke:0.25px #111;">tickets</span><svg class="r" style="left:1095.5px;top:332.0px;" width="15" height="16" viewBox="0 0 15 16"><path d="M7.5 0.8 L14 2.6 Q14.2 11.5 7.5 15.2 Q0.8 11.5 1 2.6Z" fill="none" stroke="#fff" stroke-width="1.5" stroke-linejoin="round"/><circle cx="7.5" cy="6.6" r="1.7" fill="#fff"/><rect x="6.8" y="7" width="1.4" height="3.5" fill="#fff"/></svg><svg class="r" style="left:1121.5px;top:332.0px;" width="13" height="16" viewBox="0 0 13 16"><rect x="0" y="0" width="13" height="16" rx="1.5" fill="#fff"/><circle cx="6.5" cy="6" r="2.6" fill="#1c1329"/><path d="M1.8 14 Q1.8 10 6.5 10 Q11.2 10 11.2 14Z" fill="#1c1329"/></svg><svg class="r" style="left:1176.0px;top:332.0px;" width="13" height="16" viewBox="0 0 13 16"><rect x="0" y="0" width="13" height="16" rx="1.5" fill="#fff"/><circle cx="6.5" cy="6" r="2.6" fill="#1c1329"/><path d="M1.8 14 Q1.8 10 6.5 10 Q11.2 10 11.2 14Z" fill="#1c1329"/></svg><svg class="r" style="left:1200.5px;top:333.5px;" width="14" height="13" viewBox="0 0 14 13"><circle cx="7" cy="3.4" r="2.6" fill="none" stroke="#fff" stroke-width="1.3"/><path d="M1 12 Q1 7.8 7 7.8 Q13 7.8 13 12Z" fill="none" stroke="#fff" stroke-width="1.3" stroke-linejoin="round"/></svg><svg class="r" style="left:1365.2px;top:331.5px;" width="11" height="17" viewBox="0 0 11 17"><path d="M3 8 V3.8 Q3 0.75 5.5 0.75 Q8 0.75 8 3.8 V8" fill="none" stroke="#fff" stroke-width="1.5"/><rect x="0.75" y="7.7" width="9.5" height="8.6" rx="1.8" fill="none" stroke="#fff" stroke-width="1.5"/></svg><div class="r" style="left:0px;top:369px;width:1531px;height:54px;background:#1c1329;"></div><div class="r" style="left:9px;top:379px;width:90px;height:32px;background:#63b0ff;border-radius:3px"></div><div class="r" style="left:9px;top:378px;width:90px;height:32px;line-height:32px;text-align:center;font-size:14px;color:#1b1b1b;letter-spacing:0.3px">GET</div><div class="r" style="left:803px;top:379px;width:98px;height:32px;background:#6c757d;border-radius:3px"></div><span class="t" style="left:108px;top:384.70px;font-size:18px;line-height:18px;color:#fff;font-weight:400;letter-spacing:0.518px;-webkit-text-stroke:0.25px #fff;">/microservicebola/bolaonfiles/download/{uuid}</span><span class="t" style="left:692.8px;top:384.90px;font-size:18px;line-height:18px;color:#fff;font-weight:400;letter-spacing:0.828px;-webkit-text-stroke:0.25px #fff;">read</span><span class="t" style="left:812.8px;top:387.18px;font-size:14.5px;line-height:14.5px;color:#fff;font-weight:400;letter-spacing:0.093px;-webkit-text-stroke:0.55px #fff;">Web App v1</span><div class="r" style="left:940px;top:379px;width:99px;height:32px;background:#52e3bf;border-radius:3px"></div><span class="t" style="left:949px;top:387.18px;font-size:14.5px;line-height:14.5px;color:#111;font-weight:400;letter-spacing:0.327px;-webkit-text-stroke:0.25px #111;">BolaOnFiles</span><svg class="r" style="left:1096.5px;top:386.0px;" width="13" height="16" viewBox="0 0 13 16"><rect x="0" y="0" width="13" height="16" rx="1.5" fill="#fff"/><circle cx="6.5" cy="6" r="2.6" fill="#1c1329"/><path d="M1.8 14 Q1.8 10 6.5 10 Q11.2 10 11.2 14Z" fill="#1c1329"/></svg><svg class="r" style="left:1120.5px;top:386.0px;" width="15" height="16" viewBox="0 0 15 16"><path d="M7.5 0.8 L14 2.6 Q14.2 11.5 7.5 15.2 Q0.8 11.5 1 2.6Z" fill="none" stroke="#fff" stroke-width="1.5" stroke-linejoin="round"/><circle cx="7.5" cy="6.6" r="1.7" fill="#fff"/><rect x="6.8" y="7" width="1.4" height="3.5" fill="#fff"/></svg><svg class="r" style="left:1365.2px;top:385.5px;" width="11" height="17" viewBox="0 0 11 17"><path d="M3 8 V3.8 Q3 0.75 5.5 0.75 Q8 0.75 8 3.8 V8" fill="none" stroke="#fff" stroke-width="1.5"/><rect x="0.75" y="7.7" width="9.5" height="8.6" rx="1.8" fill="none" stroke="#fff" stroke-width="1.5"/></svg><div class="r" style="left:0px;top:423px;width:1531px;height:54px;background:#231b32;"></div><div class="r" style="left:9px;top:433px;width:90px;height:32px;background:#63b0ff;border-radius:3px"></div><div class="r" style="left:9px;top:432px;width:90px;height:32px;line-height:32px;text-align:center;font-size:14px;color:#1b1b1b;letter-spacing:0.3px">GET</div><div class="r" style="left:803px;top:433px;width:98px;height:32px;background:#6c757d;border-radius:3px"></div><span class="t" style="left:108px;top:438.70px;font-size:18px;line-height:18px;color:#fff;font-weight:400;letter-spacing:0.542px;-webkit-text-stroke:0.25px #fff;">/microservicebola/bolaonfiles/list</span><span class="t" style="left:692.8px;top:438.90px;font-size:18px;line-height:18px;color:#fff;font-weight:400;letter-spacing:0.828px;-webkit-text-stroke:0.25px #fff;">read</span><span class="t" style="left:812.8px;top:441.18px;font-size:14.5px;line-height:14.5px;color:#fff;font-weight:400;letter-spacing:0.093px;-webkit-text-stroke:0.55px #fff;">Web App v1</span><div class="r" style="left:940px;top:433px;width:99px;height:32px;background:#52e3bf;border-radius:3px"></div><span class="t" style="left:949px;top:441.18px;font-size:14.5px;line-height:14.5px;color:#111;font-weight:400;letter-spacing:0.327px;-webkit-text-stroke:0.25px #111;">BolaOnFiles</span><svg class="r" style="left:1095.5px;top:440.0px;" width="15" height="16" viewBox="0 0 15 16"><path d="M7.5 0.8 L14 2.6 Q14.2 11.5 7.5 15.2 Q0.8 11.5 1 2.6Z" fill="none" stroke="#fff" stroke-width="1.5" stroke-linejoin="round"/><circle cx="7.5" cy="6.6" r="1.7" fill="#fff"/><rect x="6.8" y="7" width="1.4" height="3.5" fill="#fff"/></svg><svg class="r" style="left:1174.0px;top:439.5px;" width="17" height="17" viewBox="0 0 17 17"><circle cx="8.5" cy="8.5" r="7.6" fill="none" stroke="#fff" stroke-width="1.5"/><path d="M6 6.3 Q6 3.8 8.5 3.8 Q11 3.8 11 6.2 Q11 7.6 9.3 8.5 Q8.5 9 8.5 10.3" fill="none" stroke="#fff" stroke-width="1.5"/><circle cx="8.5" cy="12.6" r="0.95" fill="#fff"/></svg><svg class="r" style="left:1201.0px;top:440.0px;" width="13" height="16" viewBox="0 0 13 16"><rect x="0" y="0" width="13" height="16" rx="1.5" fill="#fff"/><circle cx="6.5" cy="6" r="2.6" fill="#1c1329"/><path d="M1.8 14 Q1.8 10 6.5 10 Q11.2 10 11.2 14Z" fill="#1c1329"/></svg><svg class="r" style="left:1365.2px;top:439.5px;" width="11" height="17" viewBox="0 0 11 17"><path d="M3 8 V3.8 Q3 0.75 5.5 0.75 Q8 0.75 8 3.8 V8" fill="none" stroke="#fff" stroke-width="1.5"/><rect x="0.75" y="7.7" width="9.5" height="8.6" rx="1.8" fill="none" stroke="#fff" stroke-width="1.5"/></svg><div class="r" style="left:0px;top:477px;width:1531px;height:54px;background:#1c1329;"></div><div class="r" style="left:9px;top:487px;width:90px;height:32px;background:#63b0ff;border-radius:3px"></div><div class="r" style="left:9px;top:486px;width:90px;height:32px;line-height:32px;text-align:center;font-size:14px;color:#1b1b1b;letter-spacing:0.3px">GET</div><div class="r" style="left:803px;top:487px;width:98px;height:32px;background:#6c757d;border-radius:3px"></div><span class="t" style="left:108px;top:492.70px;font-size:18px;line-height:18px;color:#fff;font-weight:400;letter-spacing:0.458px;-webkit-text-stroke:0.25px #fff;">/microservicebola/bolavertical/employees</span><span class="t" style="left:692.8px;top:492.90px;font-size:18px;line-height:18px;color:#fff;font-weight:400;letter-spacing:0.828px;-webkit-text-stroke:0.25px #fff;">read</span><span class="t" style="left:812.8px;top:495.18px;font-size:14.5px;line-height:14.5px;color:#fff;font-weight:400;letter-spacing:0.093px;-webkit-text-stroke:0.55px #fff;">Web App v1</span><div class="r" style="left:940px;top:487px;width:113px;height:32px;background:#52e3bf;border-radius:3px"></div><span class="t" style="left:949px;top:495.18px;font-size:14.5px;line-height:14.5px;color:#111;font-weight:400;letter-spacing:0.496px;-webkit-text-stroke:0.25px #111;">BOLA Vertical</span><svg class="r" style="left:1175.5px;top:495.5px;" width="14" height="13" viewBox="0 0 14 13"><circle cx="7" cy="3.4" r="2.6" fill="none" stroke="#fff" stroke-width="1.3"/><path d="M1 12 Q1 7.8 7 7.8 Q13 7.8 13 12Z" fill="none" stroke="#fff" stroke-width="1.3" stroke-linejoin="round"/></svg><svg class="r" style="left:1201.0px;top:494.0px;" width="13" height="16" viewBox="0 0 13 16"><rect x="0" y="0" width="13" height="16" rx="1.5" fill="#fff"/><circle cx="6.5" cy="6" r="2.6" fill="#1c1329"/><path d="M1.8 14 Q1.8 10 6.5 10 Q11.2 10 11.2 14Z" fill="#1c1329"/></svg><svg class="r" style="left:1365.2px;top:493.5px;" width="11" height="17" viewBox="0 0 11 17"><path d="M3 8 V3.8 Q3 0.75 5.5 0.75 Q8 0.75 8 3.8 V8" fill="none" stroke="#fff" stroke-width="1.5"/><rect x="0.75" y="7.7" width="9.5" height="8.6" rx="1.8" fill="none" stroke="#fff" stroke-width="1.5"/></svg><div class="r" style="left:0px;top:531px;width:1531px;height:54px;background:#231b32;"></div><div class="r" style="left:9px;top:541px;width:90px;height:32px;background:#63b0ff;border-radius:3px"></div><div class="r" style="left:9px;top:540px;width:90px;height:32px;line-height:32px;text-align:center;font-size:14px;color:#1b1b1b;letter-spacing:0.3px">GET</div><div class="r" style="left:803px;top:541px;width:98px;height:32px;background:#6c757d;border-radius:3px"></div><span class="t" style="left:108px;top:546.70px;font-size:18px;line-height:18px;color:#fff;font-weight:400;letter-spacing:0.281px;-webkit-text-stroke:0.25px #fff;">/microservicebola/bolave...ployees/{employee_uuid}</span><span class="t" style="left:692.8px;top:546.90px;font-size:18px;line-height:18px;color:#fff;font-weight:400;letter-spacing:0.828px;-webkit-text-stroke:0.25px #fff;">read</span><span class="t" style="left:812.8px;top:549.17px;font-size:14.5px;line-height:14.5px;color:#fff;font-weight:400;letter-spacing:0.093px;-webkit-text-stroke:0.55px #fff;">Web App v1</span><div class="r" style="left:940px;top:541px;width:113px;height:32px;background:#52e3bf;border-radius:3px"></div><span class="t" style="left:949px;top:549.17px;font-size:14.5px;line-height:14.5px;color:#111;font-weight:400;letter-spacing:0.496px;-webkit-text-stroke:0.25px #111;">BOLA Vertical</span><svg class="r" style="left:1095.5px;top:548.0px;" width="15" height="16" viewBox="0 0 15 16"><path d="M7.5 0.8 L14 2.6 Q14.2 11.5 7.5 15.2 Q0.8 11.5 1 2.6Z" fill="none" stroke="#fff" stroke-width="1.5" stroke-linejoin="round"/><circle cx="7.5" cy="6.6" r="1.7" fill="#fff"/><rect x="6.8" y="7" width="1.4" height="3.5" fill="#fff"/></svg><svg class="r" style="left:1121.5px;top:548.0px;" width="13" height="16" viewBox="0 0 13 16"><rect x="0" y="0" width="13" height="16" rx="1.5" fill="#fff"/><circle cx="6.5" cy="6" r="2.6" fill="#1c1329"/><path d="M1.8 14 Q1.8 10 6.5 10 Q11.2 10 11.2 14Z" fill="#1c1329"/></svg><svg class="r" style="left:1176.0px;top:548.0px;" width="13" height="16" viewBox="0 0 13 16"><rect x="0" y="0" width="13" height="16" rx="1.5" fill="#fff"/><circle cx="6.5" cy="6" r="2.6" fill="#1c1329"/><path d="M1.8 14 Q1.8 10 6.5 10 Q11.2 10 11.2 14Z" fill="#1c1329"/></svg><svg class="r" style="left:1200.5px;top:549.5px;" width="14" height="13" viewBox="0 0 14 13"><circle cx="7" cy="3.4" r="2.6" fill="none" stroke="#fff" stroke-width="1.3"/><path d="M1 12 Q1 7.8 7 7.8 Q13 7.8 13 12Z" fill="none" stroke="#fff" stroke-width="1.3" stroke-linejoin="round"/></svg><svg class="r" style="left:1365.2px;top:547.5px;" width="11" height="17" viewBox="0 0 11 17"><path d="M3 8 V3.8 Q3 0.75 5.5 0.75 Q8 0.75 8 3.8 V8" fill="none" stroke="#fff" stroke-width="1.5"/><rect x="0.75" y="7.7" width="9.5" height="8.6" rx="1.8" fill="none" stroke="#fff" stroke-width="1.5"/></svg><div class="r" style="left:0px;top:585px;width:1531px;height:54px;background:#1c1329;"></div><div class="r" style="left:9px;top:595px;width:90px;height:32px;background:#4ccc8f;border-radius:3px"></div><div class="r" style="left:9px;top:594px;width:90px;height:32px;line-height:32px;text-align:center;font-size:14px;color:#1b1b1b;letter-spacing:0.3px">POST</div><div class="r" style="left:803px;top:595px;width:98px;height:32px;background:#6c757d;border-radius:3px"></div><div class="r" style="left:940px;top:595px;width:88px;height:32px;background:#52e3bf;border-radius:3px"></div><div class="r" style="left:1531px;top:0px;width:9px;height:598px;background:#150e20;"></div><div class="r" style="left:1531px;top:0px;width:9px;height:517px;background:#ffffff;"></div></div><span class="t" style="left:1372px;top:850.25px;font-size:19px;line-height:19px;color:#fff;font-weight:400;letter-spacing:0.342px;-webkit-text-stroke:0.25px #fff;">41 items</span><div class="r" style="left:1465px;top:840px;width:268px;height:40px;background:#111111;border:1px solid #2c2830;border-radius:5px;box-sizing:content-box;left:1464.5px;top:840px;width:268px;height:40px"></div><div class="r" style="left:1510px;top:841px;width:44px;height:40px;background:#d63384;"></div><div class="r" style="left:1599.5px;top:841px;width:1px;height:40px;background:#2c2830;"></div><div class="r" style="left:1644.5px;top:841px;width:1px;height:40px;background:#2c2830;"></div><div class="r" style="left:1689.3px;top:841px;width:1px;height:40px;background:#2c2830;"></div><svg class="r" style="left:1482px;top:852px;" width="10" height="16" viewBox="0 0 10 16"><path d="M8.5 1 L1.5 8 L8.5 15" fill="none" stroke="#9a96a0" stroke-width="1.8" stroke-linecap="round" stroke-linejoin="round"/></svg><svg class="r" style="left:1706.5px;top:852px;" width="10" height="16" viewBox="0 0 10 16"><path d="M1.5 1 L8.5 8 L1.5 15" fill="none" stroke="#fff" stroke-width="1.8" stroke-linecap="round" stroke-linejoin="round"/></svg><span class="t" style="left:1527px;top:849.85px;font-size:19px;line-height:19px;color:#fff;font-weight:400;-webkit-text-stroke:0.25px #fff;">1</span><span class="t" style="left:1571.5px;top:849.85px;font-size:19px;line-height:19px;color:#fff;font-weight:400;-webkit-text-stroke:0.25px #fff;">2</span><span class="t" style="left:1616.5px;top:849.85px;font-size:19px;line-height:19px;color:#fff;font-weight:400;-webkit-text-stroke:0.25px #fff;">3</span><span class="t" style="left:1661.5px;top:849.85px;font-size:19px;line-height:19px;color:#fff;font-weight:400;-webkit-text-stroke:0.25px #fff;">4</span><div class="r" style="left:1752px;top:840px;width:140px;height:41.5px;background:#111111;border:1px solid #a8a2ad;border-radius:3px"></div><span class="t" style="left:1767px;top:849.45px;font-size:19px;line-height:19px;color:#fff;font-weight:400;letter-spacing:0.079px;-webkit-text-stroke:0.25px #fff;">12 / page</span><svg class="r" style="left:1862.5px;top:857px;" width="13" height="8" viewBox="0 0 13 8"><path d="M1 1 L6.5 7 L12 1" fill="none" stroke="#fff" stroke-width="1.5" stroke-linecap="round" stroke-linejoin="round"/></svg>
</body></html>
